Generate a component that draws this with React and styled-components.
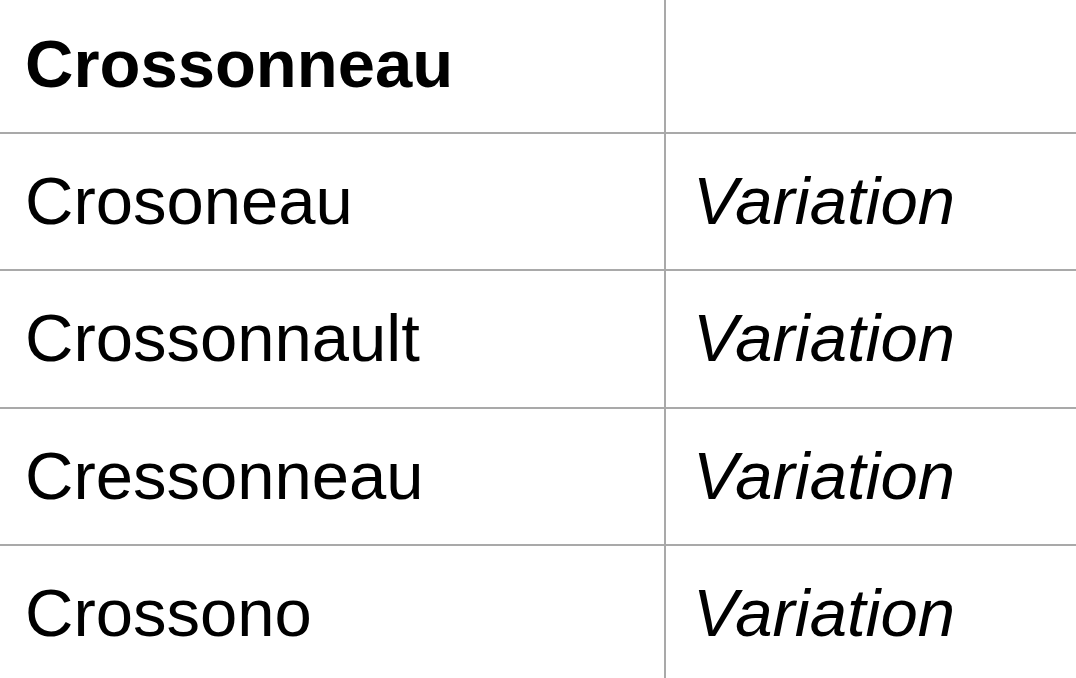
import React from "react";
import styled, { createGlobalStyle } from "styled-components";

const GlobalStyle = createGlobalStyle`
  html, body {
    margin: 0;
    padding: 0;
    background: #ffffff;
    overflow: hidden;
  }
  body {
    font-family: "Liberation Sans", Arial, Helvetica, sans-serif;
    color: #000000;
  }
`;

const Table = styled.div`
  width: 100%;
  display: flex;
  flex-direction: column;
`;

const Row = styled.div`
  display: grid;
  grid-template-columns: 666px 1fr;
  box-sizing: border-box;
  height: ${(p) => (p.$head ? "133.5px" : "137.6px")};
  border-bottom: 2px solid #a9a9a9;
`;

const Cell = styled.div`
  box-sizing: border-box;
  padding: ${(p) => (p.$head ? "26px" : "29px")} 0 0 ${(p) => (p.$first ? "25px" : "27px")};
  font-size: 67px;
  line-height: 75px;
  font-weight: ${(p) => (p.$bold ? 700 : 400)};
  font-style: ${(p) => (p.$italic ? "italic" : "normal")};
  border-right: ${(p) => (p.$first ? "2px solid #a9a9a9" : "none")};
  white-space: nowrap;
`;

const variants = ["Crosoneau", "Crossonnault", "Cressonneau", "Crossono"];

export default function App() {
  return (
    <>
      <GlobalStyle />
      <Table>
        <Row $head>
          <Cell $first $bold $head>
            Crossonneau
          </Cell>
          <Cell $head />
        </Row>
        {variants.map((name) => (
          <Row key={name}>
            <Cell $first>{name}</Cell>
            <Cell $italic>Variation</Cell>
          </Row>
        ))}
      </Table>
    </>
  );
}
